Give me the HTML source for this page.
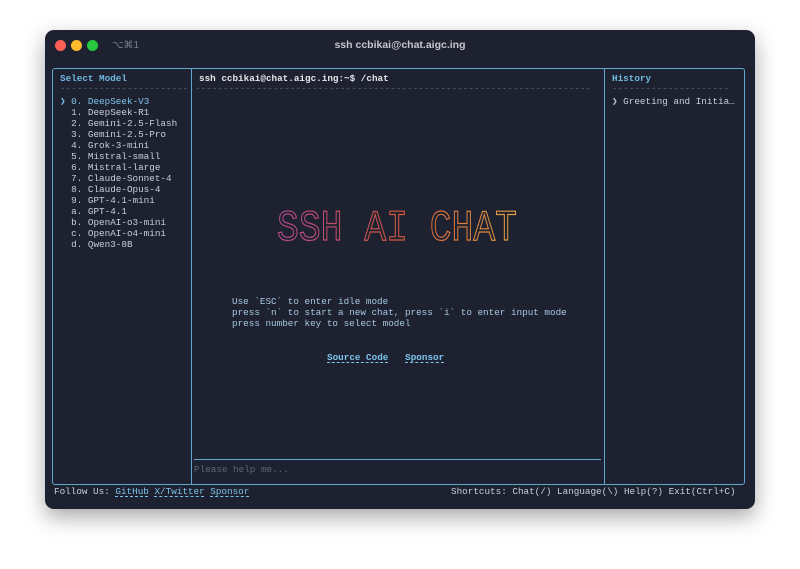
<!DOCTYPE html>
<html><head><style>
*{margin:0;padding:0;box-sizing:border-box}
body{width:800px;height:569px;background:#fff;position:relative;overflow:hidden;font-family:"Liberation Mono","DejaVu Sans Mono",monospace;font-size:9.3px;color:#c9ced8}
.win{position:absolute;left:45px;top:30px;width:710px;height:479px;background:#1e2230;border-radius:9px;box-shadow:0 8px 22px rgba(0,0,0,.35)}
.dot{position:absolute;top:10px;width:11px;height:11px;border-radius:50%}
.t{position:absolute;white-space:pre;line-height:11px}
.box{position:absolute;left:7px;top:38px;width:693px;height:417px;border:1px solid #62a6cf;border-radius:3px}
.vl{position:absolute;top:0;bottom:0;width:1px;background:#62a6cf}
.hd{color:#6fb8e2;font-weight:bold}
.dash{color:#5d6678}
.lk{color:#7cc2ea;text-decoration:underline dashed;text-underline-offset:2px}
</style></head><body>
<div class="win">
<div class="dot" style="left:10px;background:#fe5f57"></div>
<div class="dot" style="left:26px;background:#febc2e"></div>
<div class="dot" style="left:42px;background:#28c840"></div>
<div class="t" style="left:67px;top:10px;color:#7a7f8a;font-family:'Liberation Sans',sans-serif;font-size:10px">⌥⌘1</div>
<div class="t" style="left:0;width:710px;text-align:center;top:10px;color:#c5c8cf;font-family:'Liberation Sans',sans-serif;font-size:10.5px;font-weight:bold">ssh ccbikai@chat.aigc.ing</div>
<div class="box">
<div class="vl" style="left:138px"></div>
<div class="vl" style="left:551px"></div>
</div>
<div class="t hd" style="left:15px;top:43px">Select Model</div>
<div class="t dash" style="left:15px;top:53px">-----------------------</div>
<div class="t" style="left:15px;top:66px"><span style="color:#7cc2ea">❯ 0. DeepSeek-V3</span>
  1. DeepSeek-R1
  2. Gemini-2.5-Flash
  3. Gemini-2.5-Pro
  4. Grok-3-mini
  5. Mistral-small
  6. Mistral-large
  7. Claude-Sonnet-4
  8. Claude-Opus-4
  9. GPT-4.1-mini
  a. GPT-4.1
  b. OpenAI-o3-mini
  c. OpenAI-o4-mini
  d. Qwen3-8B</div>
<div class="t" style="left:154px;top:43px;color:#e4e6ea;font-weight:bold">ssh ccbikai@chat.aigc.ing:~$ /chat</div>
<div class="t dash" style="left:150px;top:53px">-----------------------------------------------------------------------</div>
<div class="t hd" style="left:567px;top:43px">History</div>
<div class="t dash" style="left:567px;top:53px">---------------------</div>
<div class="t" style="left:567px;top:66px">❯ Greeting and Initia…</div>
<svg style="position:absolute;left:228px;top:172px" width="250" height="44">
<defs><linearGradient id="g" x1="0" x2="1"><stop offset="0" stop-color="#b4488f"/><stop offset=".5" stop-color="#d4563f"/><stop offset="1" stop-color="#e0a040"/></linearGradient></defs>
<text x="4" y="38" font-family="Liberation Mono,monospace" font-size="44" fill="none" stroke="url(#g)" stroke-width="1.2" textLength="240" lengthAdjust="spacingAndGlyphs">SSH AI CHAT</text>
</svg>
<div class="t" style="left:187px;top:266px;color:#a6c8e0">Use `ESC` to enter idle mode
press `n` to start a new chat, press `i` to enter input mode
press number key to select model</div>
<div class="t" style="left:282px;top:322px"><span class="lk" style="font-weight:bold">Source Code</span>   <span class="lk" style="font-weight:bold">Sponsor</span></div>
<div style="position:absolute;left:149px;top:429px;width:407px;height:1px;background:#62a6cf"></div>
<div class="t" style="left:149px;top:434px;color:#5d6678">Please help me...</div>
<div class="t" style="left:9px;top:456px">Follow Us: <span class="lk">GitHub</span> <span class="lk">X/Twitter</span> <span class="lk">Sponsor</span></div>
<div class="t" style="left:406px;top:456px">Shortcuts: Chat(/) Language(\) Help(?) Exit(Ctrl+C)</div>
</div>
</body></html>
